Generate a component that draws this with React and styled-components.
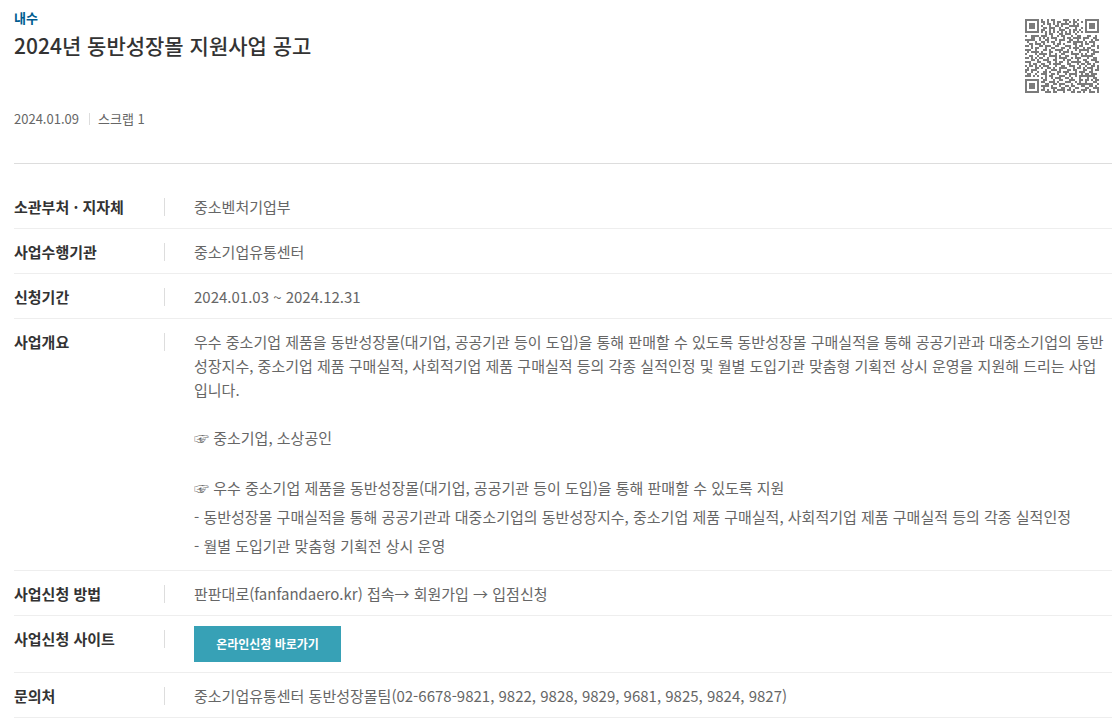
import React from "react";
import styled, { createGlobalStyle } from "styled-components";

const GlobalStyle = createGlobalStyle`
  *, *::before, *::after { box-sizing: border-box; }
  body {
    margin: 0;
    background: #fff;
    color: #666;
    font-family: "Noto Sans CJK KR", "Noto Sans", sans-serif;
    font-size: 15px;
    line-height: 24px;
  }
`;

const Page = styled.main`
  padding: 8px 4px 3px 14px;
`;

const Header = styled.header`
  display: flex;
  justify-content: space-between;
  align-items: flex-start;
  min-height: 156px;
  padding-bottom: 32px;
  border-bottom: 1px solid #ddd;
`;

const Category = styled.p`
  margin: 0;
  color: #005c8f;
  font-size: 13px;
  font-weight: 700;
  line-height: 20px;
`;

const Title = styled.h1`
  margin: 0;
  color: #333;
  font-size: 21px;
  font-weight: 500;
  line-height: 34px;
`;

const Meta = styled.ul`
  display: flex;
  align-items: center;
  margin: 47px 0 0;
  padding: 0;
  list-style: none;
  font-size: 13px;
  line-height: 20px;
`;

const MetaItem = styled.li`
  display: flex;
  align-items: center;

  & + &::before {
    content: "";
    height: 12px;
    margin: 0 8px 0 10px;
    border-left: 1px solid #ddd;
  }
`;

const QrImage = styled.svg`
  flex: none;
  width: 74px;
  height: 74px;
  margin: 11px 13px 0 0;
  fill: #7b7b7b;
`;

const Details = styled.dl`
  margin: 0;
  padding-top: 20px;
`;

const Row = styled.div`
  display: flex;
  align-items: flex-start;
  padding: 10px 0;
  border-bottom: 1px solid #eee;
`;

const Label = styled.dt`
  display: flex;
  flex: none;
  align-items: center;
  justify-content: space-between;
  width: 151px;
  color: #333;
  font-weight: 700;
  line-height: 26px;
  margin-bottom: -2px;

  &::after {
    content: "";
    height: 18px;
    border-right: 1px solid #ddd;
  }
`;

const Value = styled.dd`
  flex: 1;
  min-width: 0;
  margin: 0 0 0 29px;
`;

const Text = styled.p`
  margin: 0;
  padding-top: 1px;
  margin-bottom: -1px;

  & + & { margin-top: 24px; }
`;

const Lines = styled.ul`
  margin: 24px 0 0;
  padding: 0;
  list-style: none;
  line-height: 29px;
`;

const ApplyLink = styled.a`
  display: flex;
  align-items: center;
  justify-content: center;
  width: 147px;
  height: 36px;
  background: #37a1b6;
  color: #fff;
  font-size: 12px;
  font-weight: 700;
  text-decoration: none;
`;

const QR_ROWS = [
  "####### . #..#.##....###..#.#.. . #######",
  "#.....# . ##.#..#.##..#.#.##..# . #.....#",
  "#.###.# . .#.##.#.#.####..#.#.. . #.###.#",
  "#.###.# . #...#..##.#...#####.. . #.###.#",
  "#.###.# . .##.###..#..##...#..# . #.###.#",
  "#.....# . ##..#.#..###..#.##.#. . #.....#",
  "####### . #.#.#.#.#.#.#.#.#.#.# . #######",
  "....... . ..#.##...##.###..#... . .......",
  "#..####. ###..#..#.##...#..##.. .##..#..",
  "...##..# .#.#.###...#.##.####.# ##..##.#",
  "#####..# ..##...#.###..##..#..# ...#.###",
  ".#...#.. ##.#.##..#...##.#####. #.###..#",
  "..##.### .#....#.##.#....##..#. ##..#...",
  "##.#...# #.###..##...###..#.##. ...##.##",
  "...#.##. ..#..##...##..#.###..# .##...#.",
  "###..#.. .##.#..####..#...#.### ##.##..#",
  ".#.####. #...##...#.###.#...#.. .#..###.",
  "#....#.# ###.#..#..##...####.#. #..##..#",
  "..##..#. .#..####.#..##...#..## ####...#",
  "##.#.#.# #..#...#.####..#.###.. .#..##.#",
  "...##.#. .###..##...#.##...#..# #..###..",
  "###...## ...##..#.##..#.#####.. ##...##.",
  "..#.##.. ##..#.####...##...#.## .##.#..#",
  "#.##.#.# .###...#..##..###..#.. #..##.#.",
  ".#...##. #..##.#..####...#.##.# .###..##",
  "##.###.. ..#..###.#...##.##...# #..#.##.",
  "#..#..#. .##.#...##.###...#.### ..##...#",
  ".##..#.. ###..##.#...#.####..#. ##.###..",
  "###.#.#. ..#.##...###..#..#.### #####..#",
  "........ #.#..#.###..##.#...#.. .#..##.#",
  "####### . .##...#..##...###..## .##.#.##",
  "#.....# . ##..###.#...###..#.#. .#...##.",
  "#.###.# . ..##..##.###...#..### #####..#",
  "#.###.# . ####.#...#..##.##...# #..##.#.",
  "#.###.# . .#...###..##..#..##.. .##..###",
  "#.....# . ##.#..#.####.##.#...# ##.#...#",
  "####### . ..###.##...#...##.##. #..###.#",
].map((row) => row.replace(/ /g, "").slice(0, 37));

const qrPath = QR_ROWS.map((row, y) =>
  [...row].map((cell, x) => (cell === "#" ? `M${x} ${y}h1v1h-1z` : "")).join("")
).join("") ;

function QrCode() {
  return (
    <QrImage viewBox="0 0 37 37" role="img" aria-label="QR" shapeRendering="crispEdges">
      <path d={qrPath} />
    </QrImage>
  );
}

function Detail({ label, children }) {
  return (
    <Row>
      <Label>{label}</Label>
      <Value>{children}</Value>
    </Row>
  );
}

export default function App() {
  return (
    <>
      <GlobalStyle />
      <Page lang="ko">
        <Header>
          <div>
            <Category>내수</Category>
            <Title>2024년 동반성장몰 지원사업 공고</Title>
            <Meta>
              <MetaItem>2024.01.09</MetaItem>
              <MetaItem>스크랩 1</MetaItem>
            </Meta>
          </div>
          <QrCode />
        </Header>
        <Details>
          <Detail label="소관부처 · 지자체"><Text>중소벤처기업부</Text></Detail>
          <Detail label="사업수행기관"><Text>중소기업유통센터</Text></Detail>
          <Detail label="신청기간"><Text>2024.01.03 ~ 2024.12.31</Text></Detail>
          <Detail label="사업개요">
            <Text>
              우수 중소기업 제품을 동반성장몰(대기업, 공공기관 등이 도입)을 통해 판매할 수 있도록 동반성장몰 구매실적을 통해 공공기관과 대중소기업의 동반
              <br />
              성장지수, 중소기업 제품 구매실적, 사회적기업 제품 구매실적 등의 각종 실적인정 및 월별 도입기관 맞춤형 기획전 상시 운영을 지원해 드리는 사업
              <br />
              입니다.
            </Text>
            <Text>☞ 중소기업, 소상공인</Text>
            <Lines>
              <li>☞ 우수 중소기업 제품을 동반성장몰(대기업, 공공기관 등이 도입)을 통해 판매할 수 있도록 지원</li>
              <li>- 동반성장몰 구매실적을 통해 공공기관과 대중소기업의 동반성장지수, 중소기업 제품 구매실적, 사회적기업 제품 구매실적 등의 각종 실적인정</li>
              <li>- 월별 도입기관 맞춤형 기획전 상시 운영</li>
            </Lines>
          </Detail>
          <Detail label="사업신청 방법"><Text>판판대로(fanfandaero.kr) 접속→ 회원가입 → 입점신청</Text></Detail>
          <Detail label="사업신청 사이트">
            <ApplyLink href="#apply">온라인신청 바로가기</ApplyLink>
          </Detail>
          <Detail label="문의처">
            <Text>중소기업유통센터 동반성장몰팀(02-6678-9821, 9822, 9828, 9829, 9681, 9825, 9824, 9827)</Text>
          </Detail>
        </Details>
      </Page>
    </>
  );
}
